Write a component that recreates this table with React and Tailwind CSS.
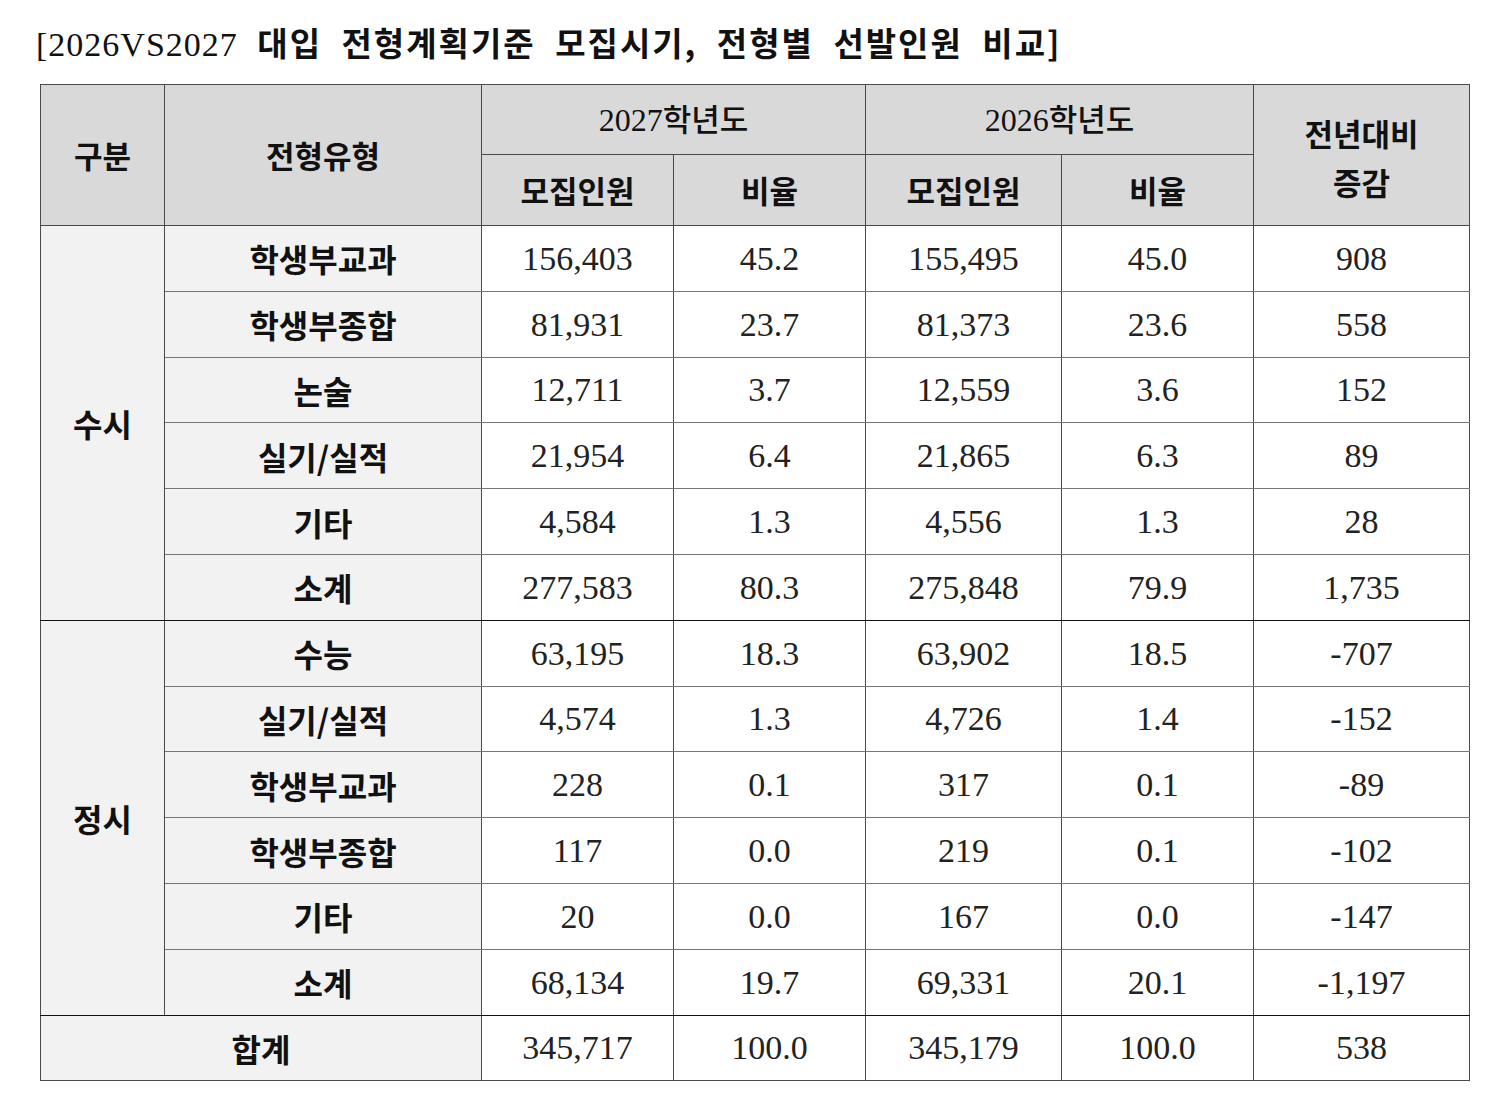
import React from 'react';

// ─── Data ─────────────────────────────────────────────────────────────────────
const SUSI = [
    ['학생부교과', '156,403', '45.2', '155,495', '45.0', '908'],
    ['학생부종합', '81,931', '23.7', '81,373', '23.6', '558'],
    ['논술', '12,711', '3.7', '12,559', '3.6', '152'],
    ['실기/실적', '21,954', '6.4', '21,865', '6.3', '89'],
    ['기타', '4,584', '1.3', '4,556', '1.3', '28'],
    ['소계', '277,583', '80.3', '275,848', '79.9', '1,735'],
];

const JEONGSI = [
    ['수능', '63,195', '18.3', '63,902', '18.5', '-707'],
    ['실기/실적', '4,574', '1.3', '4,726', '1.4', '-152'],
    ['학생부교과', '228', '0.1', '317', '0.1', '-89'],
    ['학생부종합', '117', '0.0', '219', '0.1', '-102'],
    ['기타', '20', '0.0', '167', '0.0', '-147'],
    ['소계', '68,134', '19.7', '69,331', '20.1', '-1,197'],
];

const TOTAL = ['345,717', '100.0', '345,179', '100.0', '538'];

// ─── Shared cell classes ──────────────────────────────────────────────────────
const HEAD = 'bg-[#d9d9d9] border border-[#4a4a4a] text-center font-bold text-[31px] text-[#111]';
const LABEL = 'bg-[#f2f2f2] border border-[#4a4a4a] text-center font-bold text-[32px] text-[#111]';
const NUM = 'bg-white border border-[#4a4a4a] text-center text-[34px] text-[#222] font-["Liberation_Serif",serif]';

function GroupRows({ name, rows, last }) {
    return rows.map((r, i) => (
        <tr key={r[0] + i} className="h-[65.8px]">
            {i === 0 && (
                <td rowSpan={rows.length} className={`${LABEL} ${last ? '' : 'border-b-[#111]'}`}>
                    {name}
                </td>
            )}
            <td className={`${LABEL} ${i === rows.length - 1 ? 'border-b-[#111]' : 'border-b-[#777]'}`}>{r[0]}</td>
            {r.slice(1).map((v, j) => (
                <td key={j} className={`${NUM} ${i === rows.length - 1 ? 'border-b-[#111]' : 'border-b-[#777]'}`}>{v}</td>
            ))}
        </tr>
    ));
}

// Year heading: serif digits, gothic hangul
function Year({ y }) {
    return (
        <>
            <span className="font-['Liberation_Serif',serif] font-normal text-[32px]">{y}</span>
            <span className="font-medium">학년도</span>
        </>
    );
}

export default function App() {
    return (
        <div className="w-[1500px] h-[1120px] bg-white pl-[40px] pt-[20px] font-['Noto_Sans_CJK_KR',sans-serif]">
            {/* ── Title ─────────────────────────────────────────────────────── */}
            <h1 className="ml-[-4px] h-[44px] leading-[44px] text-[33px] font-bold tracking-[2px] [word-spacing:10px] text-[#111] whitespace-nowrap">
                <span className="font-['Liberation_Serif',serif] font-normal text-[34px] tracking-[1px]">[2026VS2027</span>
                {' '}대입 전형계획기준 모집시기, 전형별 선발인원 비교]
            </h1>

            {/* ── Table ─────────────────────────────────────────────────────── */}
            <table className="mt-[20px] w-[1429px] table-fixed border-collapse border border-[#808080]">
                <colgroup>
                    <col className="w-[124px]" />
                    <col className="w-[317px]" />
                    <col className="w-[192px]" />
                    <col className="w-[192px]" />
                    <col className="w-[196px]" />
                    <col className="w-[192px]" />
                    <col className="w-[216px]" />
                </colgroup>
                <thead>
                    <tr className="h-[70px]">
                        <th rowSpan={2} className={HEAD}>구분</th>
                        <th rowSpan={2} className={HEAD}>전형유형</th>
                        <th colSpan={2} className={HEAD}><Year y="2027" /></th>
                        <th colSpan={2} className={HEAD}><Year y="2026" /></th>
                        <th rowSpan={2} className={`${HEAD} leading-[49px] pt-[4px]`}>
                            전년대비<br />증감
                        </th>
                    </tr>
                    <tr className="h-[71px]">
                        <th className={HEAD}>모집인원</th>
                        <th className={HEAD}>비율</th>
                        <th className={HEAD}>모집인원</th>
                        <th className={HEAD}>비율</th>
                    </tr>
                </thead>
                <tbody>
                    <GroupRows name="수시" rows={SUSI} />
                    <GroupRows name="정시" rows={JEONGSI} />
                    <tr className="h-[65.8px]">
                        <td colSpan={2} className={LABEL}>합계</td>
                        {TOTAL.map((v, j) => (
                            <td key={j} className={NUM}>{v}</td>
                        ))}
                    </tr>
                </tbody>
            </table>
        </div>
    );
}
